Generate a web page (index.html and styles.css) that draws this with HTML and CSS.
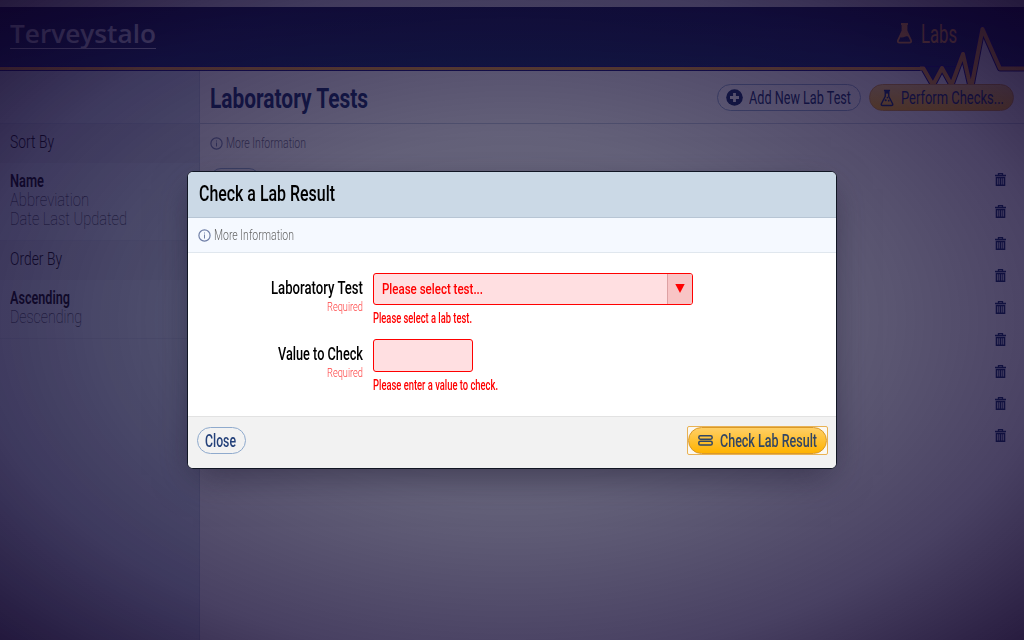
FILE: index.html
```
<!DOCTYPE html>
<html lang="en">
<head>
<meta charset="utf-8">
<title>Laboratory Tests</title>
<link rel="stylesheet" href="styles.css">
</head>
<body>
<svg class="defs" width="0" height="0">
  <symbol id="flask" viewBox="0 0 16 21"><path d="M4.500 1h7M6 2v6L1.600 17q-1 2.600 1.600 2.600h9.600q2.600 0 1.600-2.600L10 8V2" fill="none" stroke="currentColor" stroke-width="1.800"/><path d="M6 2h4v7l3 5.500q-2-2-4-1t-4 1L3.500 14 6 8z" fill="currentColor"/></symbol>
  <symbol id="flask-line" viewBox="0 0 16 20"><path d="M4.500 1.500h7M6 2v6L1.600 16.500q-.8 2 1.400 2h10q2.200 0 1.400-2L10 8V2" fill="none" stroke="currentColor" stroke-width="1.600"/><path d="M6 2h4v3H6z" fill="currentColor"/><circle cx="8.500" cy="9.500" r="1" fill="currentColor"/><circle cx="6.500" cy="12.500" r="1.200" fill="currentColor"/><circle cx="10" cy="13" r="1" fill="currentColor"/></symbol>
  <symbol id="info" viewBox="0 0 13 13"><circle cx="6.500" cy="6.500" r="5.600" fill="none" stroke="currentColor" stroke-width="1.200"/><path d="M6 5.500h1v4H6zM6 3.400h1v1.100H6z" fill="currentColor"/></symbol>
  <symbol id="trash" viewBox="0 0 11 13"><path d="M3.500 2V.600h4V2M0 2.500h11" fill="none" stroke="currentColor" stroke-width="1.300"/><path d="M1.500 4.500h8v7.800h-8z" fill="none" stroke="currentColor" stroke-width="1.600"/><path d="M3.800 4.500v8M5.500 4.500v8M7.200 4.500v8" stroke="currentColor" stroke-width="1.100"/></symbol>
</svg>
<div class="app">
  <header class="masthead">
    <div class="logo"><span class="fit" data-width="146">Terveystalo</span></div>
    <div class="section"><svg class="section-icon"><use href="#flask"/></svg><span class="fit" data-width="36">Labs</span></div>
    <svg class="pulse" viewBox="0 0 120 70">
      <path class="pulse-page" d="M29 48L38 29.500 47.500 48 59 15 67 48 78.500-10 96 29.500V48z"/>
      <path class="pulse-nav" d="M19.500 28L29 46 38 28zM38 28l9.500 18L56 28zM60 28l7 22 5-22z"/>
      <path class="pulse-edge" d="M18 29.500h1.500L29 46l9-17 9.500 17L59 15l8 35L78.500-10 96 29.500h24"/>
      <path class="pulse-line" d="M16 29.500h3.500L29 46l9-17 9.500 17L59 15l8 35L78.500-10 96 29.500h24"/>
    </svg>
  </header>
  <div class="columns">
    <aside class="sidebar">
      <div class="side-blank"></div>
      <h3 class="side-title"><span class="fit" data-width="44">Sort By</span></h3>
      <ul class="choices">
        <li class="active"><span class="fit" data-width="34">Name</span></li>
        <li><span class="fit" data-width="79">Abbreviation</span></li>
        <li><span class="fit" data-width="117">Date Last Updated</span></li>
      </ul>
      <h3 class="side-title"><span class="fit" data-width="52">Order By</span></h3>
      <ul class="choices last">
        <li class="active"><span class="fit" data-width="60">Ascending</span></li>
        <li><span class="fit" data-width="72">Descending</span></li>
      </ul>
    </aside>
    <main class="content">
      <div class="titlebar">
        <h1><span class="fit" data-width="158">Laboratory Tests</span></h1>
        <div class="actions">
          <a class="btn add"><svg width="17" height="17" viewBox="0 0 17 17"><circle cx="8.500" cy="8.500" r="8.300" fill="currentColor"/><path d="M8.500 4v9M4 8.500h9" stroke="#fff" stroke-width="2.800"/></svg><span class="fit" data-width="102">Add New Lab Test</span></a>
          <a class="btn gold perform"><svg width="14" height="18"><use href="#flask-line"/></svg><span class="fit" data-width="103">Perform Checks...</span></a>
        </div>
      </div>
      <div class="more"><svg width="13" height="13"><use href="#info"/></svg><span class="fit" data-width="80">More Information</span></div>
      <div class="rows">
        <div class="row"><span class="tag"></span><svg><use href="#trash"/></svg></div>
        <div class="row"><svg><use href="#trash"/></svg></div>
        <div class="row"><svg><use href="#trash"/></svg></div>
        <div class="row"><svg><use href="#trash"/></svg></div>
        <div class="row"><svg><use href="#trash"/></svg></div>
        <div class="row"><svg><use href="#trash"/></svg></div>
        <div class="row"><svg><use href="#trash"/></svg></div>
        <div class="row"><svg><use href="#trash"/></svg></div>
        <div class="row"><svg><use href="#trash"/></svg></div>
      </div>
    </main>
  </div>
</div>
<div class="overlay">
  <section class="dialog">
    <h2 class="dialog-title"><span class="fit" data-width="136">Check a Lab Result</span></h2>
    <div class="more dialog-more"><svg width="13" height="13"><use href="#info"/></svg><span class="fit" data-width="80">More Information</span></div>
    <form class="form">
      <div class="field">
        <div class="label"><span class="fit" data-width="92">Laboratory Test</span><small class="fit" data-width="36">Required</small></div>
        <div class="control">
          <div class="select"><span class="fit" data-width="101">Please select test...</span><i class="arrow"><svg width="10" height="10" viewBox="0 0 10 10"><path d="M.300 0h9.400L5 9z" fill="red"/></svg></i></div>
          <p class="error"><span class="fit" data-width="99">Please select a lab test.</span></p>
        </div>
      </div>
      <div class="field">
        <div class="label"><span class="fit" data-width="85">Value to Check</span><small class="fit" data-width="36">Required</small></div>
        <div class="control">
          <div class="input"></div>
          <p class="error"><span class="fit" data-width="125">Please enter a value to check.</span></p>
        </div>
      </div>
    </form>
    <footer class="dialog-foot">
      <a class="btn close"><span class="fit" data-width="31">Close</span></a>
      <div class="focus"><a class="btn gold check"><svg width="15" height="11" viewBox="0 0 15 11"><rect x=".8" y=".8" width="13.400" height="3.400" rx="1.600" fill="none" stroke="currentColor" stroke-width="1.500"/><rect x=".8" y="6.200" width="13.400" height="3.800" rx="1.600" fill="none" stroke="currentColor" stroke-width="1.500"/></svg><span class="fit" data-width="97">Check Lab Result</span></a></div>
    </footer>
  </section>
</div>
<script src="fit.js"></script>
</body>
</html>
```
FILE: styles.css
```
* { box-sizing: border-box; }
body { margin: 0; height: 640px; overflow: hidden; background: #fff; color: #000; font-family: Roboto, "Noto Sans", sans-serif; }
h1, h2, h3, p, ul { margin: 0; padding: 0; list-style: none; font-weight: 400; }
.defs { position: absolute; }
.fit { display: inline-block; white-space: nowrap; transform-origin: 0 50%; flex: none; }
.app { height: 640px; display: flex; flex-direction: column; border-top: 7px solid #d9dde2; }

.masthead { position: relative; flex: none; height: 64px; display: flex; justify-content: space-between; padding: 0 67px 0 10px; background: linear-gradient(#031040, #08245a); border-top: 1px solid #001040; border-bottom: 1px solid #0a0a70; box-shadow: inset 0 -3px #f0a020, inset 0 -4px #0a0a70; color: #f09a30; }
.logo { align-self: flex-start; margin-top: 12px; height: 29px; border-bottom: 1px solid #c4cbe0; color: #c4cbe0; font: 600 26px/27px "Open Sans", sans-serif; }
.section { display: flex; align-items: flex-start; gap: 8px; padding-top: 13px; font-weight: 400; font-size: 25px; line-height: 28px; }
.section-icon { width: 17px; height: 21px; margin-top: 2px; }
.pulse { position: absolute; left: 904px; top: 31px; width: 120px; height: 70px; overflow: visible; }
.pulse-page { fill: #fff; }
.pulse-nav { fill: #08245a; }
.pulse-edge, .pulse-line { fill: none; stroke-linejoin: round; }
.pulse-edge { stroke: #0a0a70; stroke-width: 6; }
.pulse-line { stroke: #f0a020; stroke-width: 4; }

.columns { flex: 1; display: flex; min-height: 0; }
.sidebar { width: 200px; background: #cbd9e7; border-right: 1px solid #b4c4d8; }
.side-blank { height: 53px; border-bottom: 1px solid #b4c4d8; }
.side-title { height: 39px; padding: 5px 10px 0; background: #c3cfdd; font-weight: 300; font-size: 18px; line-height: 26px; }
.choices { height: 78px; padding: 8px 10px 0; border-bottom: 1px solid #bccadb; font-weight: 100; color: #101828; }
.choices.last { height: 59px; }
.choices li { height: 19px; line-height: 19px; }
.choices .fit { font-size: 18px; line-height: 19px; vertical-align: top; }
.choices .active { color: #000; font-weight: 600; }
.content { flex: 1; }
.titlebar { height: 53px; display: flex; align-items: center; justify-content: space-between; padding: 0 10px; border-bottom: 1px solid #c0cddd; }
h1 { color: #08245c; font-size: 28px; line-height: 34px; padding-top: 4px; }
h1 .fit { font-weight: 700; }
.actions { display: flex; gap: 8px; position: relative; padding-top: 1px; }
.btn { display: flex; align-items: center; height: 27px; border: 1px solid #8faacd; border-radius: 14px; color: #24417a; font-size: 18px; line-height: 25px; }
.add, .perform { color: #08245c; }
.add { width: 144px; padding-left: 8px; gap: 6px; }
.perform { width: 145px; padding-left: 10px; gap: 7px; }
.gold { background: linear-gradient(#ffcf65, #ffb300); border-color: #d9992a; }
.more { height: 38px; display: flex; align-items: center; gap: 3px; padding-left: 10px; color: #7180a8; font-weight: 300; font-size: 14px; }
.more .fit { color: #667; }
.rows { padding: 1px 18px 0 10px; }
.row { height: 32px; display: flex; align-items: center; }
.row svg { width: 11px; height: 13px; margin-left: auto; color: #08245c; }
.tag { width: 50px; height: 22px; border: 1px solid #8faacd; border-radius: 11px; }

.overlay { position: fixed; inset: 0; z-index: 10; display: flex; align-items: center; justify-content: center; background: radial-gradient(ellipse farthest-corner at center, rgba(20, 20, 46, .61) 0%, rgba(24, 20, 56, .67) 40%, rgba(21, 11, 54, .78) 75%, rgba(16, 3, 42, .9) 100%); }
.dialog { width: 650px; height: 298px; display: flex; flex-direction: column; border: 1px solid #111624; border-radius: 6px; overflow: hidden; background: #fff; box-shadow: 0 12px 35px -6px rgba(30, 25, 50, .6); }
.dialog-title { height: 46px; padding: 7px 11px; background: #cbd9e6; border-bottom: 1px solid #b7c5d4; font-weight: 500; font-size: 22px; line-height: 30px; }
.dialog-more { height: 35px; background: #f5f9ff; border-bottom: 1px solid #e0e7ee; }
.dialog-more .fit { color: #666; }
.form { flex: 1; display: flex; flex-direction: column; gap: 11px; padding-top: 20px; }
.field { display: flex; gap: 10px; height: 55px; }
.label { width: 175px; display: flex; flex-direction: column; align-items: flex-end; padding-top: 3px; font-weight: 500; font-size: 18px; line-height: 23px; }
.label small { color: #ff4040; font-size: 12.5px; line-height: 15px; font-weight: 300; }
.select { width: 320px; height: 32px; display: flex; justify-content: space-between; padding-left: 8px; border: 1px solid red; border-radius: 3px; overflow: hidden; background: #ffdfe1; color: red; font-weight: 500; font-size: 14px; line-height: 31px; }
.arrow { width: 25px; display: flex; align-items: center; justify-content: center; background: #f8c4c5; border-left: 1px solid #dda1a3; }
.input { width: 100px; height: 33px; border: 1px solid red; border-radius: 3px; background: #ffdfe1; }
.error { padding-top: 4px; color: red; font-weight: 500; font-size: 14px; line-height: 18px; }
.error .fit { vertical-align: top; }
.dialog-foot { height: 52px; flex: none; display: flex; justify-content: space-between; align-items: flex-start; padding: 9px 8px 0 9px; background: #f2f2f2; border-top: 1px solid #e2e2e2; }
.close { width: 49px; height: 27px; margin-top: 1px; padding-left: 7px; }
.close, .check { font-weight: 500; }
.focus { border: 1px solid #e9b254; border-radius: 2px; background: #fbf8f1; }
.check { width: 139px; padding-left: 9px; gap: 7px; color: #324664; }
```
FILE: fit.js
```
document.querySelectorAll('.fit').forEach(function (el) {
  var target = Number(el.dataset.width);
  var natural = el.getBoundingClientRect().width;
  el.style.width = target + 'px';
  el.style.transform = 'scaleX(' + target / natural + ')';
});
```
